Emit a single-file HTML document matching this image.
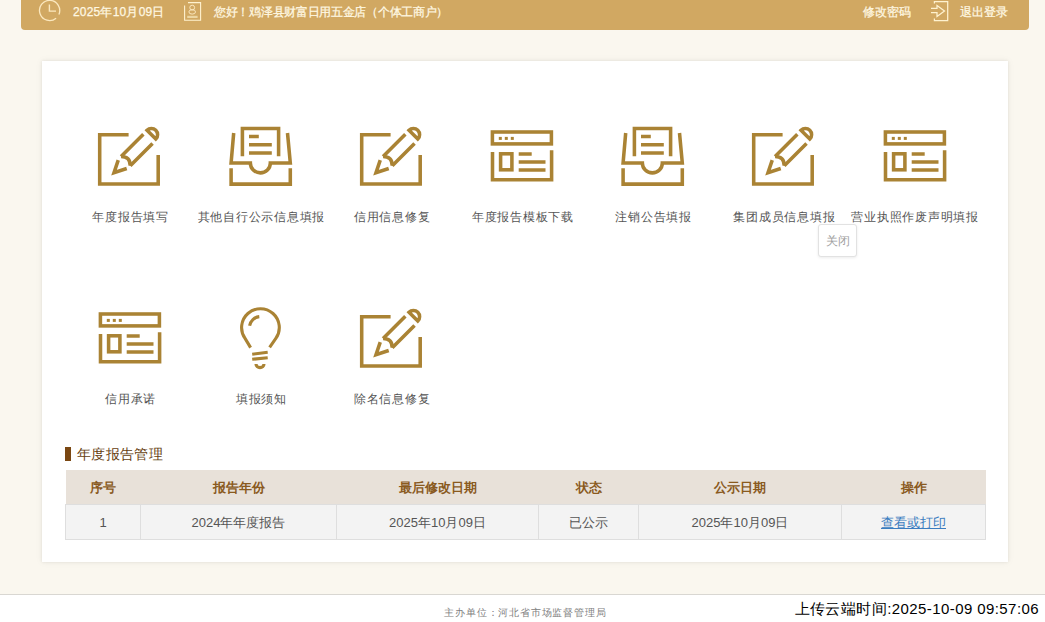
<!DOCTYPE html>
<html><head><meta charset="utf-8">
<style>
*{margin:0;padding:0;box-sizing:border-box}
html,body{width:1045px;height:622px;overflow:hidden}
body{background:#faf7ef;font-family:"Liberation Sans",sans-serif;position:relative;color:#555}
.abs{position:absolute;white-space:nowrap}
#hdr{position:absolute;left:21px;top:0;width:1008px;height:29.5px;background:#d1a862;border-radius:0 0 4px 4px}
.ht{position:absolute;top:0;height:24px;line-height:24px;font-size:12px;color:#fff8e2;-webkit-text-stroke:0.25px #fff8e2}
#card{position:absolute;left:42px;top:61px;width:966px;height:501px;background:#fff;box-shadow:0 0 3px rgba(0,0,0,.09),0 0 8px rgba(0,0,0,.05)}
.ico{position:absolute;width:64px;height:64px;overflow:visible}
.lbl{position:absolute;width:131px;text-align:center;font-size:12px;letter-spacing:0.75px;padding-left:0.75px;line-height:16px;color:#555}
svg .s{fill:none;stroke:#aa8334;stroke-width:3.55;stroke-linecap:butt;stroke-linejoin:miter}
#ttl{position:absolute;left:65px;top:446px;height:15px}
#tbl{position:absolute;left:65px;top:470px;width:920px;border-collapse:collapse;table-layout:fixed;font-size:13px}
#tbl th{background:#e8e1d9;color:#8a5a1e;font-weight:bold;height:34.5px;text-align:center;padding:1px 0 0}
#tbl td{background:#f3f3f3;color:#555;height:35px;text-align:center;border:1px solid #dedede;padding:1px 0 0}
#foot{position:absolute;left:0;top:594px;width:1045px;height:28px;background:#fff;border-top:1px solid #d9d7d2}
</style></head><body>
<svg width="0" height="0" style="position:absolute">
<defs>
<symbol id="i-edit" viewBox="0 0 64 64" overflow="visible">
 <path class="s" d="M30.6,10.8 H1.7 V59.9 H60.2 V31"/>
 <g transform="translate(16,48.8) rotate(-45)">
  <path class="s" d="M12,-6 L0,0 L12,6"/>
  <path class="s" d="M16.5,-6.5 Q23,0 16.5,6.5"/>
  <path class="s" d="M16.5,-6.5 H48 M16.5,6.5 H48"/>
  <path class="s" d="M53.4,-6.7 A6.2,6.2 0 0 1 53.4,5.7 Z"/>
 </g>
</symbol>
<symbol id="i-inbox" viewBox="0 0 64 64" overflow="visible">
 <path class="s" d="M13.4,32.2 V4.5 H49.6 V32.2"/>
 <path class="s" d="M20,12.5 H29.8 M20,20.8 H42.8 M20,28.9 H42.8"/>
 <path class="s" d="M4.7,9 L2.1,38.9 H21.35 A10,10 0 0 0 41.35,38.9 H61.3 L58.5,9"/>
 <path class="s" d="M2.1,44.2 V60.1 H61.3 V44.2"/>
</symbol>
<symbol id="i-tpl" viewBox="0 0 64 64" overflow="visible">
 <rect class="s" x="2.4" y="8" width="59" height="11.9"/>
 <rect x="8.8" y="12.9" width="3" height="3" fill="#aa8334"/>
 <rect x="14.8" y="12.9" width="3" height="3" fill="#aa8334"/>
 <rect x="20.8" y="12.9" width="3" height="3" fill="#aa8334"/>
 <path class="s" d="M2.5,28 V55.7 H61.6 V26.3"/>
 <rect class="s" x="10.6" y="29.8" width="11.3" height="16"/>
 <path class="s" d="M28.7,30 H41.7 M28.7,38 H55.5 M28.7,46 H55.5"/>
</symbol>
<symbol id="i-bulb" viewBox="0 0 64 64" overflow="visible">
 <path class="s" style="stroke-width:3.1" d="M21.6,41.6 L16.06,32.44 A18.85,18.85 0 1 1 46.84,32.44 L40.6,41.4"/>
 <path class="s" style="stroke-width:3.1" d="M20.6,19.8 A11,11 0 0 1 30.3,10.6"/>
 <path class="s" style="stroke-width:3.1" d="M23.2,48.2 L38.7,46.3 M23.2,53.3 L38.7,51.7"/>
 <path class="s" style="stroke-width:3.1" d="M27,58 A4,3.6 0 0 0 35,58"/>
</symbol>
</defs>
</svg>

<div id="hdr"></div>
<!-- clock -->
<svg class="abs" style="left:0;top:0" width="70" height="30" viewBox="0 0 70 30">
 <path d="M56.09,18.24 A10.1,10.1 0 1 1 58.9,14.45" fill="none" stroke="#fbe8bf" stroke-width="1.3"/>
 <path d="M49.4,4.6 V11.1 H56" fill="none" stroke="#fbe8bf" stroke-width="1.4"/>
</svg>
<div class="ht" style="left:73px;letter-spacing:0.2px">2025年10月09日</div>
<!-- user icon -->
<svg class="abs" style="left:170px;top:0" width="40" height="26" viewBox="170 0 40 26">
 <path d="M188,2.6 H200.6 V20.3 H184.6 V5.5" fill="none" stroke="#fff2cf" stroke-width="1.1"/>
 <circle cx="192.2" cy="7.6" r="2.4" fill="none" stroke="#fbe8bf" stroke-width="1"/>
 <ellipse cx="192.2" cy="11.9" rx="3.3" ry="2.2" fill="none" stroke="#fbe8bf" stroke-width="1"/>
 <rect x="187.2" y="15.8" width="10.4" height="2.2" fill="#ecd6a2"/>
</svg>
<div class="ht" style="left:214px;letter-spacing:-0.3px">您好！鸡泽县财富日用五金店（个体工商户）</div>
<div class="ht" style="left:863px">修改密码</div>
<svg class="abs" style="left:920px;top:0" width="35" height="26" viewBox="920 0 35 26">
 <path d="M934.4,3.6 V1.6 H947.7 V20.5 H934.4 V18.5" fill="none" stroke="#fff2cf" stroke-width="1.25"/>
 <path d="M931,8.4 H937 V5.4 L944.5,10.9 L937,16.5 V12.5 H931" fill="none" stroke="#fff2cf" stroke-width="1.25"/>
</svg>
<div class="ht" style="left:960px">退出登录</div>

<div id="card"></div>

<!-- row 1 -->
<svg class="ico" style="left:98.2px;top:124px"><use href="#i-edit"/></svg>
<svg class="ico" style="left:229px;top:124px"><use href="#i-inbox"/></svg>
<svg class="ico" style="left:359.7px;top:124px"><use href="#i-edit"/></svg>
<svg class="ico" style="left:490.2px;top:124px"><use href="#i-tpl"/></svg>
<svg class="ico" style="left:621.3px;top:124px"><use href="#i-inbox"/></svg>
<svg class="ico" style="left:752px;top:124px"><use href="#i-edit"/></svg>
<svg class="ico" style="left:882.5px;top:124px"><use href="#i-tpl"/></svg>

<div class="lbl" style="left:64.7px;top:209px">年度报告填写</div>
<div class="lbl" style="left:195.5px;top:209px">其他自行公示信息填报</div>
<div class="lbl" style="left:326.2px;top:209px">信用信息修复</div>
<div class="lbl" style="left:457px;top:209px">年度报告模板下载</div>
<div class="lbl" style="left:587.8px;top:209px">注销公告填报</div>
<div class="lbl" style="left:718.5px;top:209px">集团成员信息填报</div>
<div class="lbl" style="left:849.3px;top:209px">营业执照作废声明填报</div>

<!-- tooltip -->
<div class="abs" style="left:818.3px;top:224.2px;width:39px;height:33.2px;background:#fff;border:1px solid #e2e2e2;border-radius:3px;box-shadow:0 1px 3px rgba(0,0,0,.08);font-size:12px;color:#9e9e9e;text-align:center;line-height:32px">关闭</div>

<!-- row 2 -->
<svg class="ico" style="left:97.9px;top:305.5px"><use href="#i-tpl"/></svg>
<svg class="ico" style="left:229px;top:305.5px"><use href="#i-bulb"/></svg>
<svg class="ico" style="left:359.7px;top:305.5px"><use href="#i-edit"/></svg>

<div class="lbl" style="left:64.7px;top:390.5px">信用承诺</div>
<div class="lbl" style="left:195.5px;top:390.5px">填报须知</div>
<div class="lbl" style="left:326.2px;top:390.5px">除名信息修复</div>

<!-- title -->
<div class="abs" style="left:65px;top:447px;width:6px;height:13.5px;background:#7a4712"></div>
<div class="abs" style="left:77px;top:444.5px;font-size:14px;letter-spacing:0.35px;line-height:18px;color:#66400f">年度报告管理</div>

<table id="tbl">
<colgroup><col style="width:75px"><col style="width:196px"><col style="width:202px"><col style="width:100px"><col style="width:203px"><col style="width:144px"></colgroup>
<tr><th>序号</th><th>报告年份</th><th>最后修改日期</th><th>状态</th><th>公示日期</th><th>操作</th></tr>
<tr><td>1</td><td>2024年年度报告</td><td>2025年10月09日</td><td>已公示</td><td>2025年10月09日</td><td><a style="color:#3b7dc0;text-decoration:underline">查看或打印</a></td></tr>
</table>

<div id="foot"></div>
<div class="abs" style="left:0;top:604.5px;width:1050px;text-align:center;font-size:10px;letter-spacing:0.8px;padding-left:0.8px;line-height:16px;color:#808080">主办单位：河北省市场监督管理局</div>
<div class="abs" style="right:6px;top:598.5px;font-size:15px;line-height:20px;color:#000;letter-spacing:0.42px">上传云端时间:2025-10-09 09:57:06</div>
</body></html>
